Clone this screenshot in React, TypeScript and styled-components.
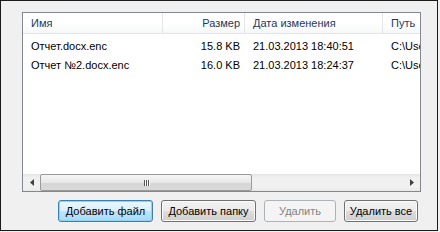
import React from "react";
import styled, { createGlobalStyle } from "styled-components";

const Global = createGlobalStyle`
  html, body { margin: 0; padding: 0; background: #f0f0f0; }
  body { font-family: Tahoma, "Liberation Sans", "DejaVu Sans", sans-serif; font-size: 11px; color: #000; }
`;

const Frame = styled.div`
  box-sizing: border-box;
  width: 438px;
  height: 231px;
  border: 1px solid #1a1a1a;
  background: #f0f0f0;
  padding: 11px 16px 0 21px;
  display: flex;
  flex-direction: column;
`;

const List = styled.div`
  box-sizing: border-box;
  width: 399px;
  height: 180px;
  border: 1px solid #828790;
  background: #fff;
  display: flex;
  flex-direction: column;
  overflow: hidden;
`;

const Cols = "140px 82px 138px 40px";

const HeaderRow = styled.div`
  display: grid;
  grid-template-columns: ${Cols};
  height: 20px;
  border-bottom: 1px solid #e5e5e5;
  background: linear-gradient(#ffffff, #ffffff 50%, #f6f7f8);
`;

const HeadCell = styled.div<{ $right?: boolean }>`
  display: flex;
  align-items: center;
  justify-content: ${(p) => (p.$right ? "flex-end" : "flex-start")};
  padding: ${(p) => (p.$right ? "0 4px 0 0" : "0 0 0 8px")};
  border-right: 1px solid #e3e5e8;
  color: #1e395b;
  white-space: nowrap;
  overflow: hidden;
`;

const Body = styled.div`
  flex: 1;
  padding-top: 2px;
`;

const Row = styled.div`
  display: grid;
  grid-template-columns: ${Cols};
  height: 19px;
`;

const Cell = styled.div<{ $right?: boolean }>`
  display: flex;
  align-items: center;
  justify-content: ${(p) => (p.$right ? "flex-end" : "flex-start")};
  padding: ${(p) => (p.$right ? "0 5px 0 0" : "0 0 0 8px")};
  white-space: nowrap;
  overflow: hidden;
`;

const HScroll = styled.div`
  height: 17px;
  display: flex;
  align-items: stretch;
  background: linear-gradient(#e3e3e3, #f0f0f0 20%, #f0f0f0 80%, #e8e8e8);
`;

const Arrow = styled.div`
  width: 17px;
  display: flex;
  align-items: center;
  justify-content: center;
`;

const Track = styled.div`
  flex: 1;
  display: flex;
  padding: 0;
`;

const Thumb = styled.div`
  box-sizing: border-box;
  width: 212px;
  height: 17px;
  border: 1px solid #9a9a9a;
  border-radius: 2px;
  background: linear-gradient(#f4f4f4, #e8e8e8 50%, #d6d6d6 51%, #d9d9d9);
  display: flex;
  align-items: center;
  justify-content: center;
`;

const Grip = styled.div`
  display: flex;
  gap: 1px;
  & > span {
    width: 1px;
    height: 6px;
    background: #555;
    box-shadow: 1px 0 0 #fff;
  }
`;

const Buttons = styled.div`
  display: flex;
  gap: 8px;
  margin-top: 8px;
  padding-left: 36px;
`;

const Button = styled.button<{ $default?: boolean; $w: number }>`
  box-sizing: border-box;
  width: ${(p) => p.$w}px;
  height: 22px;
  font: inherit;
  padding: 0;
  border-radius: 3px;
  color: #000;
  border: 1px solid ${(p) => (p.$default ? "#3c7fb1" : "#707070")};
  background: ${(p) =>
    p.$default
      ? "linear-gradient(#eaf6fd, #d9f0fc 50%, #bee6fd 51%, #a7d9f5)"
      : "linear-gradient(#f2f2f2, #ebebeb 50%, #dddddd 51%, #cfcfcf)"};
  box-shadow: inset 0 0 0 1px ${(p) => (p.$default ? "#8fd3f4" : "#fcfcfc")};
  &:disabled {
    border-color: #adb2b5;
    background: #f4f4f4;
    box-shadow: inset 0 0 0 1px #f4f4f4;
    color: #838383;
  }
`;

const rows = [
  ["Отчет.docx.enc", "15.8 KB", "21.03.2013 18:40:51", "C:\\Users"],
  ["Отчет №2.docx.enc", "16.0 KB", "21.03.2013 18:24:37", "C:\\Users"],
];

export default function App() {
  return (
    <>
      <Global />
      <Frame>
        <List>
          <HeaderRow>
            <HeadCell>Имя</HeadCell>
            <HeadCell $right>Размер</HeadCell>
            <HeadCell>Дата изменения</HeadCell>
            <HeadCell>Путь</HeadCell>
          </HeaderRow>
          <Body>
            {rows.map((r) => (
              <Row key={r[0]}>
                <Cell>{r[0]}</Cell>
                <Cell $right>{r[1]}</Cell>
                <Cell>{r[2]}</Cell>
                <Cell>{r[3]}</Cell>
              </Row>
            ))}
          </Body>
          <HScroll>
            <Arrow>
              <svg width="4" height="7" viewBox="0 0 4 7"><path d="M4 0 L0 3.5 L4 7 Z" fill="#404040" /></svg>
            </Arrow>
            <Track>
              <Thumb>
                <Grip><span /><span /><span /></Grip>
              </Thumb>
            </Track>
            <Arrow>
              <svg width="4" height="7" viewBox="0 0 4 7"><path d="M0 0 L4 3.5 L0 7 Z" fill="#404040" /></svg>
            </Arrow>
          </HScroll>
        </List>
        <Buttons>
          <Button $default $w={95}>Добавить файл</Button>
          <Button $w={95}>Добавить папку</Button>
          <Button $w={72} disabled>Удалить</Button>
          <Button $w={74}>Удалить все</Button>
        </Buttons>
      </Frame>
    </>
  );
}
